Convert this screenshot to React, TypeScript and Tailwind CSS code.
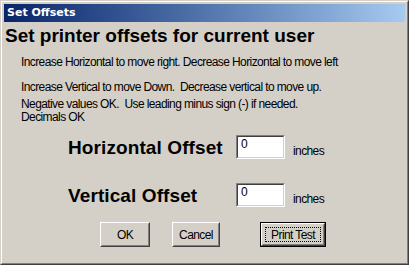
import React from 'react'

const face = 'bg-[#d4d0c8]'
const small = 'text-[12px] tracking-[-0.6px]'

function OffsetRow({ label }: { label: string }) {
  return (
    <div className="flex h-[24px] items-center">
      <div className="w-[232px] shrink-0 whitespace-nowrap pl-[64px] text-[19px] font-bold leading-none tracking-[0.1px] text-black">
        {label}
      </div>
      <div className="border border-t-[#808080] border-l-[#808080] border-r-white border-b-white">
        <div className={`h-[22px] w-[47px] border border-t-[#404040] border-l-[#404040] border-r-[#d4d0c8] border-b-[#d4d0c8] bg-white pl-[3px] leading-[14px] ${small}`}>
          0
        </div>
      </div>
      <span className={`ml-[8px] mt-[8px] ${small}`}>inches</span>
    </div>
  )
}

function Win95Button({ label, width, isDefault }: { label: string; width: string; isDefault?: boolean }) {
  if (isDefault) {
    return (
      <div className={`${width} h-[25px] border border-black`}>
        <div className="h-full border border-t-white border-l-white border-r-[#404040] border-b-[#404040]">
          <div className="flex h-full items-center justify-center border border-t-[#d4d0c8] border-l-[#d4d0c8] border-r-[#808080] border-b-[#808080] p-[2px]">
            <div className={`flex h-full w-full items-center justify-center border border-dotted border-black ${small}`}>
              {label}
            </div>
          </div>
        </div>
      </div>
    )
  }
  return (
    <div className={`${width} h-[25px] border border-t-white border-l-white border-r-[#404040] border-b-[#404040]`}>
      <div className={`flex h-full items-center justify-center border border-t-[#d4d0c8] border-l-[#d4d0c8] border-r-[#808080] border-b-[#808080] ${small}`}>
        {label}
      </div>
    </div>
  )
}

export default function App() {
  return (
    <div
      className={`h-[265px] w-[409px] border border-t-[#d4d0c8] border-l-[#d4d0c8] border-r-[#404040] border-b-[#404040] ${face}`}
      style={{ fontFamily: '"Liberation Sans", Arial, sans-serif' }}
    >
      <div className="h-full border border-t-white border-l-white border-r-[#808080] border-b-[#808080] p-[2px] text-black">
        <div className="flex h-[18px] items-center bg-linear-to-r from-[#0a246a] to-[#a6caf0] pl-[3px] text-[11px] font-bold text-white" style={{ fontFamily: '"DejaVu Sans", Tahoma, sans-serif' }}>
          Set Offsets
        </div>
        <h1 className="ml-[1px] mt-[4px] text-[19px] font-bold leading-none">
          Set printer offsets for current user
        </h1>
        <div className={`mt-[11px] pl-[17px] leading-[13px] ${small}`}>
          <p>Increase Horizontal to move right. Decrease Horizontal to move left</p>
          <p className="mt-[12px]">Increase Vertical to move Down.&nbsp; Decrease vertical to move up.</p>
          <p className="mt-[4px]">Negative values OK.&nbsp; Use leading minus sign (-) if needed.</p>
          <p>Decimals OK</p>
        </div>
        <div className="mt-[11px] flex flex-col gap-[24px]">
          <OffsetRow label="Horizontal Offset" />
          <OffsetRow label="Vertical Offset" />
        </div>
        <div className="mt-[15px] flex pl-[96px]">
          <Win95Button label="OK" width="w-[50px]" />
          <div className="w-[22px]" />
          <Win95Button label="Cancel" width="w-[48px]" />
          <div className="w-[40px]" />
          <Win95Button label="Print Test" width="w-[66px]" isDefault />
        </div>
      </div>
    </div>
  )
}
